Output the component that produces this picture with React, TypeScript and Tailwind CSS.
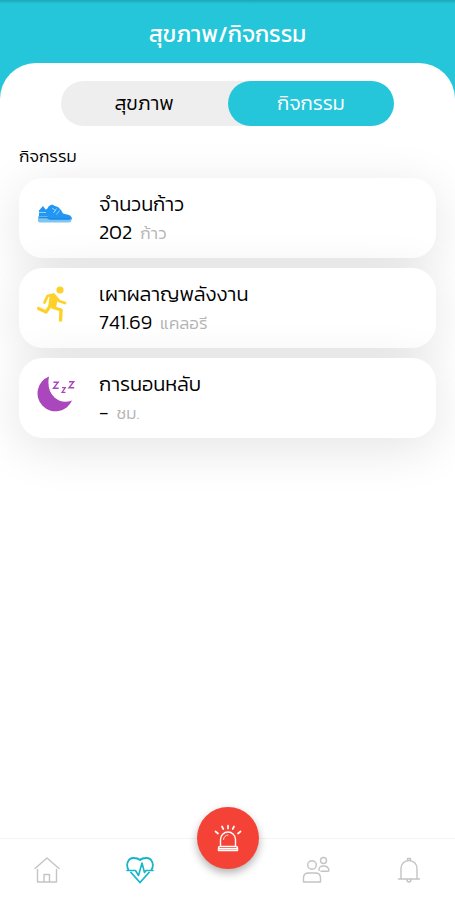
import { useState, type ReactNode } from "react";
import clsx from "clsx";

const TABS = ["สุขภาพ", "กิจกรรม"];

interface Activity {
  title: string;
  value: string;
  unit: string;
  icon: ReactNode;
}

function ShoeIcon() {
  return (
    <svg viewBox="0 0 35 20" className="h-5 w-[35px]" aria-hidden="true">
      <path
        d="M2 13V6.500L6 2l2.500 3.500L10 5l2-3 3-1.500L18 2l3 1 3 3 2 3.500 6 1.500q3 1.200 3 4.500H1z"
        fill="#2196f3"
      />
      <path d="M1 12h9l3 3h21.500q0 3.500-2.500 3.500H2.500q-1.500 0-1.500-2z" fill="#7cc6f2" />
      <path d="M2 8.500h7M15 4l4 3M19.500 4.500l-3 4.500M22.500 6.500l-3 4" stroke="#90d4f7" fill="none" />
      <path d="M2 13.500h8l3 1.500h20" stroke="#1e88e5" strokeWidth="1.500" fill="none" />
    </svg>
  );
}

function RunIcon() {
  return (
    <svg
      viewBox="0 0 30 36"
      className="h-9 w-[30px]"
      fill="none"
      stroke="#fdd12a"
      strokeLinecap="round"
      strokeLinejoin="round"
      aria-hidden="true"
    >
      <circle cx="23" cy="4" r="3.600" fill="#fdd12a" stroke="none" />
      <path d="M7.500 16.500L10.500 10l6-1.500 5.500 6.500 6 2" strokeWidth="2.800" />
      <path d="M13.500 8.500l4.500 1.500 1.500 5.500-1.500 7-6-2.500z" fill="#fdd12a" strokeWidth="1.500" />
      <path d="M13.500 19.500L9 26l-7.500-3.500" strokeWidth="3.200" />
      <path d="M15 21l9 3-.5 11.500" strokeWidth="3.400" strokeLinecap="butt" />
    </svg>
  );
}

function MoonIcon() {
  return (
    <svg viewBox="0 0 38 36" className="h-9 w-[38px]" fill="none" aria-hidden="true">
      <path d="M12 .5A18 18 0 1 0 35 24.500Q25 28 17.500 21.500 9.500 14 12 .5z" fill="#ab47bc" />
      <g stroke="#ab47bc" strokeWidth="1.400">
        <path d="M16.500 6.200h4.700l-4.700 6.100h5.200" />
        <path d="M25 11.700h3.300L25 16.300h3.500" strokeWidth="1.200" />
        <path d="M32 5.700h4.700L32 11.800h5.200" />
      </g>
    </svg>
  );
}

const ACTIVITIES: Activity[] = [
  { title: "จำนวนก้าว", value: "202", unit: "ก้าว", icon: <ShoeIcon /> },
  { title: "เผาผลาญพลังงาน", value: "741.69", unit: "แคลอรี", icon: <RunIcon /> },
  { title: "การนอนหลับ", value: "-", unit: "ชม.", icon: <MoonIcon /> },
];

function ActivityCard({ title, value, unit, icon }: Activity) {
  return (
    <li className="flex h-20 items-center rounded-3xl bg-white px-[18px] shadow-[0_10px_50px_rgba(0,0,0,0.11)]">
      <div className="flex h-11 w-[62px] shrink-0 items-center pb-2">{icon}</div>
      <div className="flex min-w-0 flex-col">
        <h3 className="text-xl leading-7 font-light">{title}</h3>
        <p className="flex items-baseline gap-2">
          <span className="text-xl leading-7 font-light">{value}</span>
          <span className="text-[17px] leading-7 font-light text-[#b4b4b4]">{unit}</span>
        </p>
      </div>
    </li>
  );
}

function NavLink({ label, active, children }: { label: string; active?: boolean; children: ReactNode }) {
  return (
    <a
      href="#"
      aria-label={label}
      className={clsx("flex items-center justify-center", active ? "text-[#17b5ca]" : "text-[#c4c4c4]")}
    >
      <svg
        viewBox="0 0 28 28"
        className="size-7"
        fill="none"
        stroke="currentColor"
        strokeWidth={active ? 1.8 : 1.4}
        strokeLinecap="round"
        strokeLinejoin="round"
      >
        {children}
      </svg>
    </a>
  );
}

function BottomNav() {
  return (
    <nav className="relative grid h-[62px] grid-cols-[93fr_93fr_83fr_93fr_93fr] border-t border-[#f4f4f4] bg-white">
      <NavLink label="หน้าหลัก">
        <path d="M2 12.500L14 2l12 10.500M4.500 13.500V26h19V13.500M11 26v-7.500h5.500V26" />
      </NavLink>
      <NavLink label="สุขภาพ" active>
        <path d="M2.300 13.500C-.5 8 2.500 2 7.500 2c3 0 5 .5 6.500 2C15.500 2.500 17.500 2 20.500 2c5 0 8 6 5.200 11.500M5 16.500l9 10 9-10" />
        <path d="M1 14.500h8.500l3 5 3.500-12.500 2.500 9.500 1.500-2h7" strokeWidth="1.600" />
      </NavLink>
      <div className="relative flex justify-center">
        <button
          type="button"
          aria-label="ฉุกเฉิน"
          className="absolute -top-8 flex size-[62px] items-center justify-center rounded-full bg-[#f44336] text-white shadow-[0_4px_8px_rgba(0,0,0,0.3)]"
        >
          <svg
            viewBox="0 0 28 28"
            className="size-7"
            fill="none"
            stroke="currentColor"
            strokeWidth="1.400"
            strokeLinecap="round"
            strokeLinejoin="round"
            aria-hidden="true"
          >
            <path d="M6.500 22.500V15.500a7.500 7.500 0 0 1 15 0v7M4.500 26.500v-2.500q0-1.500 1.500-1.500h16q1.500 0 1.500 1.500v2.500z" />
            <path d="M5 24.700h18" />
            <path d="M9.500 15.500a4.500 4.500 0 0 1 4.500-4.500" strokeWidth=".8" />
            <path d="M14 1.500v3M8 2.500l1.300 2.500M20 2.500l-1.300 2.500M1.500 7.500l2.500 2M26.500 7.500l-2.500 2" strokeWidth="1.700" />
          </svg>
        </button>
      </div>
      <NavLink label="เพื่อน">
        <circle cx="10" cy="9" r="4.300" />
        <path d="M1.500 26v-4q0-5 5-5h7q5 0 5 5v4z" />
        <circle cx="21.500" cy="4.500" r="3" />
        <path d="M17 14.500q-.5-4.500 4.500-4.500t5.500 4.500q0 .7-1 .7h-7" />
      </NavLink>
      <NavLink label="แจ้งเตือน">
        <path d="M6 23V12.500a8 8 0 0 1 16 0V23M3.500 23h21M12.500 4.500V2.500h3v2M12 23.500q0 2.500 2 2.500t2-2.500" />
      </NavLink>
    </nav>
  );
}

export default function App() {
  const [tab, setTab] = useState(TABS[1]);

  return (
    <div className="flex min-h-screen flex-col bg-[#26c6da] font-['Kanit','Prompt','Noto_Sans_Thai','Noto_Sans',sans-serif] text-black">
      <header className="flex h-[63px] items-center justify-center bg-linear-to-b from-[#1ca6b8] to-[#26c6da] to-[4px] pt-1">
        <h1 className="text-[23px] leading-8 text-white">สุขภาพ/กิจกรรม</h1>
      </header>

      <main className="flex-1 overflow-hidden rounded-t-[36px] bg-white px-[19px] pt-[18px] pb-12">
        <div role="tablist" className="mx-auto flex h-[45px] w-4/5 rounded-full bg-[#eeeeee]">
          {TABS.map((t) => (
            <button
              key={t}
              type="button"
              role="tab"
              aria-selected={t === tab}
              onClick={() => setTab(t)}
              className={clsx(
                "flex-1 rounded-full pb-0.5 text-xl leading-7 font-light",
                t === tab && "bg-[#26c6da] text-white"
              )}
            >
              {t}
            </button>
          ))}
        </div>

        <h2 className="mt-[18px] text-[17px] leading-6 font-light">กิจกรรม</h2>
        <ul className="mt-[10px] flex flex-col gap-[10px]">
          {ACTIVITIES.map((a) => (
            <ActivityCard key={a.title} {...a} />
          ))}
        </ul>
      </main>

      <BottomNav />
    </div>
  );
}
